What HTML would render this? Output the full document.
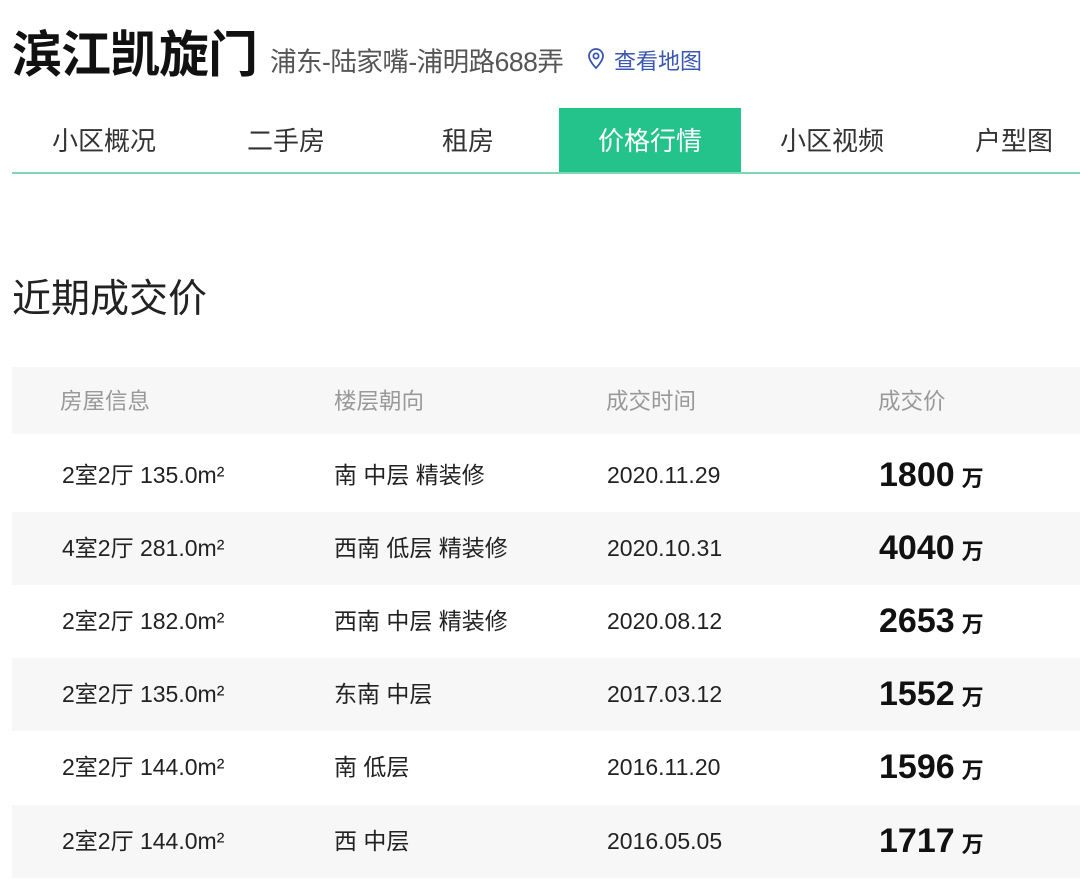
<!DOCTYPE html>
<html><head><meta charset="utf-8"><style>
*{margin:0;padding:0;box-sizing:border-box}
body{width:1080px;height:890px;background:#fff;font-family:"Liberation Sans","Noto Sans CJK SC",sans-serif;color:#222;position:relative;overflow:hidden}
.a{position:absolute;white-space:nowrap}
.title{left:12px;top:15px;font-size:50px;font-weight:bold;color:#111;letter-spacing:-1px}
.sub{left:270px;top:40px;font-size:26.5px;color:#555;letter-spacing:-0.5px}
.map{left:614px;top:44px;font-size:22px;color:#3a55b4}
.tabs{position:absolute;left:12px;top:108px;width:1068px;height:66px;border-bottom:2px solid #7fd8b5}
.tab{position:absolute;top:0;width:182px;height:64px;line-height:66px;text-align:center;font-size:26px;color:#333}
.tab.on{background:#25c38c;color:#fff}
.h2{left:12px;top:268px;font-size:39px;color:#222}
.row{position:absolute;left:12px;width:1068px;height:73px}
.g{background:#f7f7f7}
.c{position:absolute;top:0;line-height:73px;font-size:23px;color:#222}
.hd .c{color:#999;font-size:22.5px;line-height:70px}
.p{font-size:34px;font-weight:bold;color:#111}
.p small{font-size:22px;margin-left:7px}
</style></head><body>
<div class="a title">滨江凯旋门</div>
<div class="a sub">浦东-陆家嘴-浦明路688弄</div>
<svg class="a" style="left:586px;top:47px" width="20" height="24" viewBox="0 0 20 24"><path d="M10 2a7 7 0 0 0-7 7c0 5 7 12 7 12s7-7 7-12a7 7 0 0 0-7-7z" fill="none" stroke="#3a55b4" stroke-width="1.8"/><circle cx="10" cy="9" r="2.6" fill="none" stroke="#3a55b4" stroke-width="1.8"/></svg>
<div class="a map">查看地图</div>
<div class="tabs">
<div class="tab" style="left:1px">小区概况</div>
<div class="tab" style="left:183px">二手房</div>
<div class="tab" style="left:365px">租房</div>
<div class="tab on" style="left:547px">价格行情</div>
<div class="tab" style="left:729px">小区视频</div>
<div class="tab" style="left:911px">户型图</div>
</div>
<div class="a h2">近期成交价</div>
<div class="row g hd" style="top:367px;height:67px"><div class="c" style="left:48px">房屋信息</div><div class="c" style="left:322px">楼层朝向</div><div class="c" style="left:594px">成交时间</div><div class="c" style="left:866px">成交价</div></div>
<div class="row" style="top:439px"><div class="c" style="left:50px">2室2厅 135.0m²</div><div class="c" style="left:322px">南 中层 精装修</div><div class="c" style="left:595px">2020.11.29</div><div class="c p" style="left:867px">1800<small>万</small></div></div>
<div class="row g" style="top:512px"><div class="c" style="left:50px">4室2厅 281.0m²</div><div class="c" style="left:322px">西南 低层 精装修</div><div class="c" style="left:595px">2020.10.31</div><div class="c p" style="left:867px">4040<small>万</small></div></div>
<div class="row" style="top:585px"><div class="c" style="left:50px">2室2厅 182.0m²</div><div class="c" style="left:322px">西南 中层 精装修</div><div class="c" style="left:595px">2020.08.12</div><div class="c p" style="left:867px">2653<small>万</small></div></div>
<div class="row g" style="top:658px"><div class="c" style="left:50px">2室2厅 135.0m²</div><div class="c" style="left:322px">东南 中层</div><div class="c" style="left:595px">2017.03.12</div><div class="c p" style="left:867px">1552<small>万</small></div></div>
<div class="row" style="top:731px"><div class="c" style="left:50px">2室2厅 144.0m²</div><div class="c" style="left:322px">南 低层</div><div class="c" style="left:595px">2016.11.20</div><div class="c p" style="left:867px">1596<small>万</small></div></div>
<div class="row g" style="top:805px"><div class="c" style="left:50px">2室2厅 144.0m²</div><div class="c" style="left:322px">西 中层</div><div class="c" style="left:595px">2016.05.05</div><div class="c p" style="left:867px">1717<small>万</small></div></div>
</body></html>
